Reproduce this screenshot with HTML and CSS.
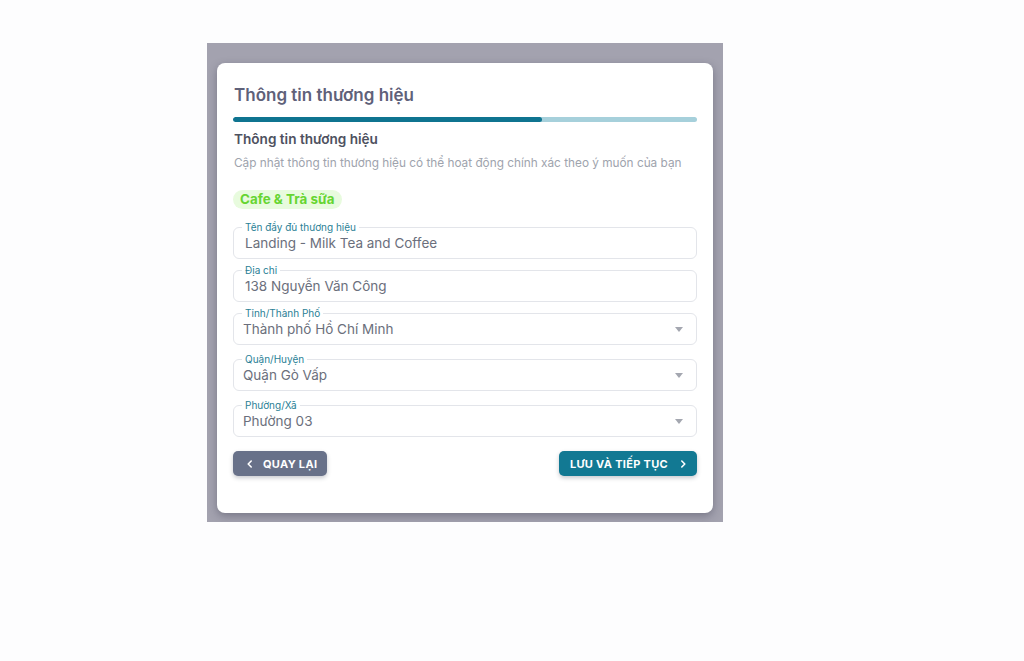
FILE: index.html
```html
<!DOCTYPE html>
<html lang="vi">
<head>
    <meta charset="UTF-8">
    <meta name="viewport" content="width=device-width, initial-scale=1.0">
    <title>Thông tin thương hiệu</title>
    <link rel="stylesheet" href="styles.css">
</head>
<body>
    <div class="backdrop">
        <div class="card">
            <h1 class="title">Thông tin thương hiệu</h1>
            <div class="progress"><div class="progress-fill"></div></div>
            <h2 class="subtitle">Thông tin thương hiệu</h2>
            <p class="desc">Cập nhật thông tin thương hiệu có thể hoạt động chính xác theo ý muốn của bạn</p>
            <span class="chip">Cafe &amp; Trà sữa</span>

            <div class="fields">
                <div class="field">
                    <label>Tên đầy đủ thương hiệu</label>
                    <div class="value">Landing - Milk Tea and Coffee</div>
                </div>
                <div class="field">
                    <label>Địa chỉ</label>
                    <div class="value">138 Nguyễn Văn Công</div>
                </div>
                <div class="field select">
                    <label>Tỉnh/Thành Phố</label>
                    <div class="value">Thành phố Hồ Chí Minh</div>
                    <span class="arrow"></span>
                </div>
                <div class="field select wide-gap">
                    <label>Quận/Huyện</label>
                    <div class="value">Quận Gò Vấp</div>
                    <span class="arrow"></span>
                </div>
                <div class="field select wide-gap">
                    <label>Phường/Xã</label>
                    <div class="value">Phường 03</div>
                    <span class="arrow"></span>
                </div>
            </div>

            <div class="actions">
                <button class="btn btn-back">
                    <svg width="8" height="10" viewBox="0 0 8 10"><path d="M5.2 2 2.2 5l3 3" fill="none" stroke="#fff" stroke-width="1.6" stroke-linecap="round" stroke-linejoin="round"/></svg>
                    Quay lại
                </button>
                <button class="btn btn-next">
                    Lưu và tiếp tục
                    <svg width="8" height="10" viewBox="0 0 8 10"><path d="M2.8 2 5.8 5l-3 3" fill="none" stroke="#fff" stroke-width="1.6" stroke-linecap="round" stroke-linejoin="round"/></svg>
                </button>
            </div>
        </div>
    </div>
</body>
</html>
```

FILE: styles.css
```css
body {
    margin: 0;
    background: #fdfdfe;
    font-family: Inter, "Noto Sans", sans-serif;
}
.backdrop {
    margin: 43px 0 0 207px;
    width: 516px;
    height: 479px;
    box-sizing: border-box;
    padding: 20px 10px 0 10px;
    background: #a3a2af;
}
.card {
    background: #fff;
    border-radius: 8px;
    height: 450px;
    box-sizing: border-box;
    padding: 20px 16px 0 16px;
    box-shadow: 0 3px 8px rgba(40, 40, 60, 0.35);
}
.title {
    margin: 0;
    font-size: 17px;
    line-height: 24px;
    font-weight: 600;
    color: #5f6179;
    padding-left: 1px;
}
.progress {
    margin-top: 10px;
    height: 5px;
    border-radius: 3px;
    background: #a6d0db;
    overflow: hidden;
}
.progress-fill {
    width: 66.6%;
    height: 100%;
    border-radius: 3px;
    background: #0f7490;
}
.subtitle {
    margin: 7px 0 0 0;
    font-size: 13.6px;
    line-height: 20px;
    font-weight: 600;
    color: #4e5160;
    padding-left: 1px;
}
.desc {
    margin: 5px 0 0 0;
    font-size: 11.8px;
    line-height: 18px;
    color: #9ea3ad;
    padding-left: 1px;
    white-space: nowrap;
}
.chip {
    display: inline-block;
    margin-top: 18px;
    padding: 0 7px;
    height: 19px;
    line-height: 19px;
    border-radius: 10px;
    background: #e8fbde;
    color: #66d531;
    font-size: 13.4px;
    font-weight: 700;
}
.fields {
    margin-top: 18px;
}
.field {
    position: relative;
    height: 32px;
    box-sizing: border-box;
    border: 1px solid #e3e5ea;
    border-radius: 6px;
    margin-bottom: 11px;
}
.field.wide-gap {
    margin-top: 14px;
}
.field label {
    position: absolute;
    top: -7px;
    left: 8px;
    padding: 0 3px;
    background: #fff;
    font-size: 10px;
    line-height: 12px;
    color: #2a7f96;
}
.value {
    padding: 5px 0 0 11px;
    font-size: 13.5px;
    line-height: 20px;
    color: #6b6f7c;
}
.select .value {
    padding-left: 9px;
}
.arrow {
    position: absolute;
    right: 13px;
    top: 13px;
    border-left: 4.5px solid transparent;
    border-right: 4.5px solid transparent;
    border-top: 5px solid #a4a7b0;
}
.actions {
    display: flex;
    justify-content: space-between;
    margin-top: 14px;
}
.btn {
    display: flex;
    align-items: center;
    gap: 9px;
    height: 25px;
    border: none;
    border-radius: 5px;
    color: #fff;
    font-family: Inter, "Noto Sans", sans-serif;
    font-size: 11px;
    font-weight: 700;
    letter-spacing: 0.3px;
    text-transform: uppercase;
    box-shadow: 0 2px 4px rgba(30, 40, 60, 0.25);
}
.btn-back {
    width: 94px;
    padding: 0 0 0 13px;
    background: #687189;
}
.btn-next {
    width: 138px;
    padding: 0 0 0 11px;
    gap: 11px;
    background: #127993;
}
```
